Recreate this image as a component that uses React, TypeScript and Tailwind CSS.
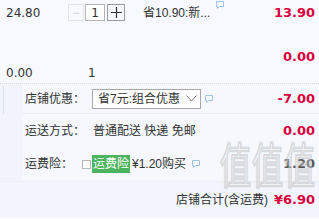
import React from 'react';

const NUM = "font-['DejaVu_Sans','Noto_Sans_CJK_SC',sans-serif]";
const CJK = "font-['Liberation_Sans','Noto_Sans_CJK_SC',sans-serif]";

function Bubble({ className = '' }: { className?: string }) {
  return (
    <svg width="8" height="8" viewBox="0 0 8 8" className={className}>
      <path d="M0.5 0.5h7v5h-4l-2 2v-2h-1z" fill="none" stroke="#9fc3ea" strokeWidth="1" />
    </svg>
  );
}

function Stepper() {
  return (
    <div className="flex h-[17px] items-center">
      <div className="flex h-[17px] w-[16px] items-center justify-center border border-[#e3e3e3] text-[12px] leading-none text-[#cfcfcf]">
        −
      </div>
      <div className={`ml-px flex h-[17px] w-[20px] items-center justify-center border border-[#b5b5b5] bg-white text-[12px] text-[#333] ${NUM}`}>
        1
      </div>
      <div className="ml-[2px] flex h-[17px] w-[18px] items-center justify-center border border-[#9a9a9a]">
        <svg width="11" height="11" viewBox="0 0 11 11">
          <path d="M5.5 0v11M0 5.5h11" stroke="#333" strokeWidth="1.2" />
        </svg>
      </div>
    </div>
  );
}

export default function App() {
  return (
    <div className={`relative h-[219px] w-[319px] overflow-hidden bg-[#f8f9fe] text-[12px] text-[#333] ${CJK}`}>
      {/* item rows */}
      <div className="h-[83px]">
        <div className="flex h-[25px] items-center">
          <div className={`w-[68px] pl-[6px] ${NUM}`}>24.80</div>
          <Stepper />
          <div className="ml-[18px] flex items-start">
            <span>省10.90:新...</span>
            <Bubble className="ml-[6px] -mt-[3px]" />
          </div>
          <div className={`flex-1 pr-[4px] text-right text-[13px] font-bold text-[#d9003c] ${NUM}`}>13.90</div>
        </div>
        <div className={`mt-[24px] flex h-[16px] items-center justify-end pr-[4px] text-[13px] font-bold text-[#d9003c] ${NUM}`}>
          0.00
        </div>
        <div className={`flex h-[16px] items-center ${NUM}`}>
          <div className="w-[88px] pl-[6px]">0.00</div>
          <div>1</div>
        </div>
      </div>

      {/* shop section */}
      <div className="flex border-t border-b border-dotted border-t-[#d3dae8] border-b-solid border-b-[#e4e9f3] bg-[#f1f4fb]">
        <div className="w-[22px] shrink-0">
          <div className="ml-[3px] mt-[2px] h-[28px] border-l border-[#dde3ee]" />
        </div>
        <div className="flex-1 bg-[#f6f8fe]">
          <div className="flex h-[30px] items-center border-b border-[#e8edf6]">
            <div className="w-[70px] pl-[3px]">店铺优惠：</div>
            <div className="flex h-[20px] w-[109px] items-center justify-between border border-[#a8a8a8] bg-white pl-[5px] pr-[3px]">
              <span>省7元:组合优惠</span>
              <svg width="11" height="7" viewBox="0 0 11 7">
                <path d="M0.5 0.5l5 5.5 5-5.5" fill="none" stroke="#777" strokeWidth="1" />
              </svg>
            </div>
            <Bubble className="ml-[4px]" />
            <div className={`flex-1 pr-[4px] text-right text-[13px] font-bold text-[#d9003c] ${NUM}`}>-7.00</div>
          </div>
          <div className="flex h-[33px] items-center">
            <div className="w-[71px] pl-[3px]">运送方式：</div>
            <div>普通配送 快递 免邮</div>
            <div className={`flex-1 pr-[4px] text-right text-[13px] font-bold text-[#d9003c] ${NUM}`}>0.00</div>
          </div>
          <div className="flex h-[34px] items-center">
            <div className="w-[60px] pl-[3px]">运费险：</div>
            <div className="h-[9px] w-[9px] border border-[#b8b8b8] bg-white" />
            <div className="ml-px flex h-[18px] items-center bg-[#4cb35e] px-[1px] text-white">运费险</div>
            <div className="ml-[2px]">¥1.20购买</div>
            <Bubble className="ml-[6px]" />
            <div className={`flex-1 pr-[4px] text-right text-[13px] font-bold text-[#555] ${NUM}`}>1.20</div>
          </div>
        </div>
      </div>

      {/* total */}
      <div className="flex h-[35px] items-center bg-[#f2f5fc] pl-[176px] pr-[4px]">
        <span className="text-[#333]">店铺合计(含运费)</span>
        <span className={`flex-1 text-right text-[13px] font-bold text-[#d9003c] ${NUM}`}>¥6.90</span>
      </div>

      {/* watermark */}
      <div className="pointer-events-none absolute left-[220px] top-[138px] origin-top scale-y-[1.55] text-[31px] leading-none tracking-[1px] text-white opacity-50 [-webkit-text-stroke:1.5px_#bdbdbd] font-['Noto_Sans_CJK_SC',sans-serif]">
        值值值
      </div>
    </div>
  );
}
